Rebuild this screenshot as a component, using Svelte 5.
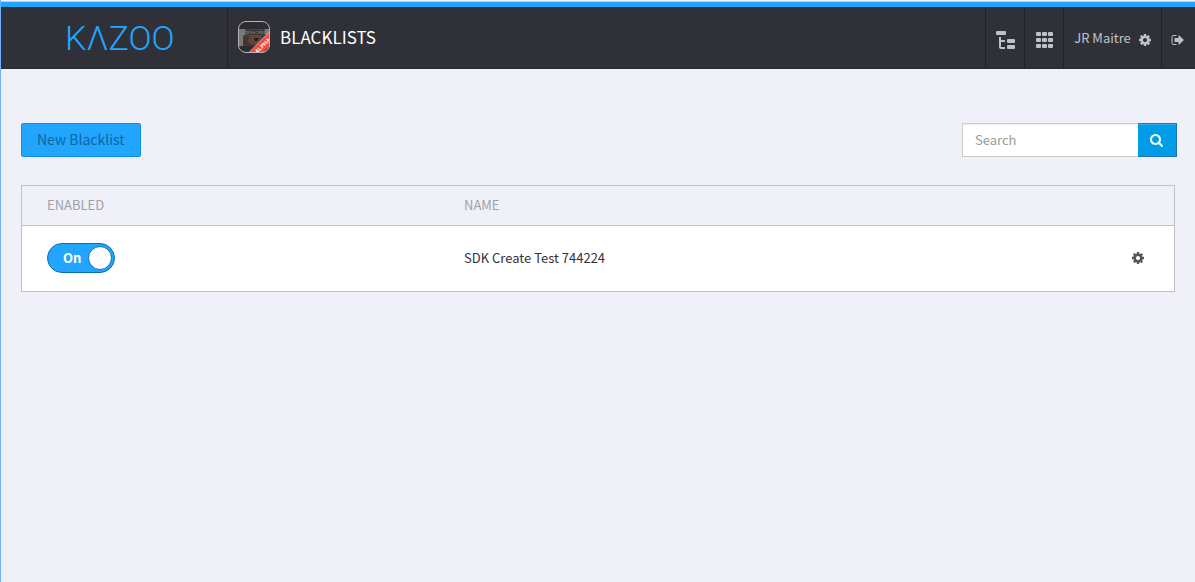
<script>
  let query = $state('');
  let blacklists = $state([{ id: 1, name: 'SDK Create Test 744224', enabled: true }]);
  const shown = $derived(
    blacklists.filter((b) => b.name.toLowerCase().includes(query.toLowerCase()))
  );
  const dots = [0, 6, 12];
</script>

{#snippet cog(size)}
  <svg width={size} height={size} viewBox="128 128 1536 1536" fill="currentColor" aria-hidden="true">
    <path d="M1152 896q0-106-75-181t-181-75-181 75-75 181 75 181 181 75 181-75 75-181zm512-109v222q0 12-8 23t-20 13l-185 28q-19 54-39 91 35 50 107 138 10 12 10 25t-9 23q-27 37-99 108t-94 71q-12 0-26-9l-138-108q-44 23-91 38-16 136-29 186-7 28-36 28h-222q-14 0-24.500-8.500t-11.500-21.500l-28-184q-49-16-90-37l-141 107q-10 9-25 9-14 0-25-11-126-114-165-168-7-10-7-23 0-12 8-23 15-21 51-66.500t54-70.500q-27-50-41-99l-183-27q-13-2-21-12.500t-8-23.500v-222q0-12 8-23t19-13l186-28q14-46 39-92-40-57-107-138-10-12-10-24 0-10 9-23 26-36 98.500-107.500t94.500-71.500q13 0 26 10l138 107q44-23 91-38 16-136 29-186 7-28 36-28h222q14 0 24.500 8.500t11.500 21.500l28 184q49 16 90 37l142-107q9-9 24-9 13 0 25 10 129 119 165 170 7 8 7 22 0 12-8 23-15 21-51 66.500t-54 70.500q26 50 41 98l183 28q13 2 21 12.500t8 23.500z" />
  </svg>
{/snippet}

<div class="page">
  <header class="topbar">
    <a class="logo" href="#home">KΛZOO</a>
    <div class="app">
      <svg class="app-icon" width="34" height="34" viewBox="0 0 34 34" aria-hidden="true">
        <defs>
          <clipPath id="tile"><rect x="1" y="1" width="32" height="32" rx="8" /></clipPath>
        </defs>
        <g clip-path="url(#tile)">
          <rect width="34" height="34" fill="#2c2c31" />
          <rect y="9" width="34" height="17" fill="#77777d" />
          <path d="M6 26V17l2-3V9h19l2 7 3 4v6z" fill="#4b342c" />
          <path d="M12 16l4-2 7 1 3 4-3 5-8 1-4-4z" fill="#60453a" />
          <path d="M17 18h5l-2 3h-2z" fill="#251b19" />
          <rect x="9" y="10" width="19" height="5" fill="#19191c" stroke="#55555a" stroke-width="1" />
          <text x="18.500" y="14" text-anchor="middle" font-size="4" fill="#8a8a8e">CENSORED</text>
          <path d="M11 34L34 11v14l-9 9z" fill="#f5473c" />
          <path d="M11 33.500L33.500 11" stroke="#e9b5b2" stroke-width="1" />
          <text class="ribbon" transform="translate(27 27) rotate(-45)" text-anchor="middle" font-size="5.500" fill="#fff">ALPHA</text>
        </g>
        <rect x="1.500" y="1.500" width="31" height="31" rx="7.500" fill="none" stroke="#b4b4b8" />
      </svg>
      <h1>BLACKLISTS</h1>
    </div>
    <nav>
      <button class="nav-item" aria-label="Account tree">
        <svg width="20" height="20" viewBox="0 0 20 20" fill="currentColor" aria-hidden="true">
          <rect x="1" y="1" width="10" height="4" rx="1" />
          <path d="M4 7h2v3h4v2H6v5h4v2H6q-2 0-2-2z" />
          <rect x="12" y="9" width="8" height="4" rx="1" />
          <rect x="12" y="15" width="8" height="4" rx="1" />
        </svg>
      </button>
      <button class="nav-item" aria-label="Applications">
        <svg width="17" height="17" viewBox="0 0 17 17" fill="currentColor" aria-hidden="true">
          {#each dots as y}
            {#each dots as x}
              <rect {x} {y} width="5" height="4" rx="1" />
            {/each}
          {/each}
        </svg>
      </button>
      <button class="nav-item user"><span>JR Maitre</span>{@render cog(12)}</button>
      <button class="nav-item exit" aria-label="Sign out">
        <svg width="14" height="14" viewBox="0 0 1792 1792" fill="currentColor" aria-hidden="true">
          <path d="M704 1440q0 4 1 20t.5 26.500-3 23.500-10 19.500-20.500 6.500h-320q-119 0-203.500-84.500t-84.500-203.500v-704q0-119 84.500-203.500t203.500-84.500h320q13 0 22.500 9.500t9.500 22.500q0 4 1 20t.5 26.500-3 23.500-10 19.500-20.500 6.500h-320q-66 0-113 47t-47 113v704q0 66 47 113t113 47h312l11.500 1 11.500 3 8 5.500 7 9 2 13.500zm928-544q0 26-19 45l-544 544q-19 19-45 19t-45-19-19-45v-288h-448q-26 0-45-19t-19-45v-384q0-26 19-45t45-19h448v-288q0-26 19-45t45-19 45 19l544 544q19 19 19 45z" />
        </svg>
      </button>
    </nav>
  </header>

  <main>
    <div class="toolbar">
      <button class="new">New Blacklist</button>
      <form class="search" onsubmit={(e) => e.preventDefault()}>
        <input type="text" placeholder="Search" aria-label="Search" bind:value={query} />
        <button aria-label="Run search">
          <svg width="13" height="13" viewBox="64 128 1664 1664" fill="currentColor" aria-hidden="true">
            <path d="M1216 832q0-185-131.500-316.500t-316.500-131.500-316.500 131.500-131.500 316.500 131.500 316.500 316.500 131.500 316.500-131.500 131.500-316.500zm512 832q0 52-38 90t-90 38q-54 0-90-38l-343-342q-179 124-399 124-143 0-273.500-55.500t-225-150-150-225-55.500-273.500 55.500-273.500 150-225 225-150 273.500-55.500 273.500 55.500 225 150 150 225 55.500 273.500q0 220-124 399l343 343q37 37 37 90z" />
          </svg>
        </button>
      </form>
    </div>

    <table>
      <thead>
        <tr>
          <th class="enabled" scope="col">ENABLED</th>
          <th scope="col">NAME</th>
          <td class="actions"></td>
        </tr>
      </thead>
      <tbody>
        {#each shown as item (item.id)}
          <tr>
            <td>
              <label class="switch" class:off={!item.enabled}>
                <input type="checkbox" bind:checked={item.enabled} />
                <span>{item.enabled ? 'On' : 'Off'}</span>
                <i></i>
              </label>
            </td>
            <td>{item.name}</td>
            <td class="actions"><button aria-label="Settings">{@render cog(12)}</button></td>
          </tr>
        {/each}
      </tbody>
    </table>
  </main>
</div>

<style>
  :global(body) {
    margin: 0;
    background: #f0f0f9;
  }
  .page {
    box-sizing: border-box;
    min-height: 100vh;
    border-left: 1px solid #6fb4fb;
    font: 13px/20px 'Noto Sans CJK SC', 'Source Sans Pro', sans-serif;
    color: #333;
  }
  .page::before {
    content: '';
    display: block;
    height: 1px;
    background: #f4f4f4;
    border-bottom: 1px solid #c3cdd6;
  }
  button,
  input {
    font: inherit;
    margin: 0;
    border-radius: 0;
  }
  svg {
    display: block;
    flex: none;
  }
  .topbar {
    display: flex;
    height: 62px;
    background: #303038;
    border-top: 5px solid #22a5ff;
    box-shadow: inset 0 -1px #2b2b33;
  }
  .logo {
    box-sizing: border-box;
    width: 227px;
    padding-left: 64px;
    border-right: 1px solid #22222a;
    color: #22a5ff;
    font: 300 34px/62px Roboto, sans-serif;
    text-decoration: none;
  }
  .app {
    display: flex;
    align-items: center;
    gap: 9px;
    flex: 1;
    padding: 0 0 2px 9px;
  }
  .app-icon {
    font-family: 'Liberation Sans', sans-serif;
    font-weight: bold;
  }
  h1 {
    margin: 0;
    color: #fff;
    font-size: 17px;
    font-weight: 400;
    line-height: 24px;
  }
  nav {
    display: flex;
  }
  .nav-item {
    box-sizing: border-box;
    display: flex;
    align-items: center;
    justify-content: center;
    width: 39px;
    padding: 4px 0 0;
    border: 0;
    border-left: 1px solid #22222a;
    background: none;
    color: #c0c0ca;
  }
  .nav-item.user {
    width: 98px;
    gap: 8px;
  }
  .nav-item.user span {
    margin-top: -4px;
  }
  .nav-item.exit {
    width: 34px;
    padding-right: 2px;
  }
  main {
    padding: 54px 20px 20px;
  }
  .toolbar {
    display: flex;
    justify-content: space-between;
    margin: 0 -2px 28px 0;
  }
  .new {
    height: 34px;
    padding: 0 15px 2px;
    border: 1px solid #0a90ee;
    border-radius: 2px;
    background: #22a5ff;
    color: #0d659f;
    font-size: 14px;
  }
  .search {
    display: flex;
  }
  .search input {
    box-sizing: border-box;
    width: 176px;
    height: 34px;
    padding: 0 12px 2px;
    border: 1px solid #ccc;
    border-right: 0;
    background: #fff;
    box-shadow: inset 0 1px 1px #00000013;
  }
  .search input::placeholder {
    color: #999;
    opacity: 1;
  }
  .search button {
    display: flex;
    align-items: center;
    justify-content: center;
    box-sizing: border-box;
    width: 39px;
    padding: 0 2px 0 0;
    border: 1px solid #1f72b5;
    border-left-color: #009ce8;
    background: #009ce8;
    box-shadow: inset 0 1px #33b0ed;
    color: #fff;
  }
  table {
    width: 100%;
    border: 1px solid #c0c0cc;
    border-spacing: 0;
    background: #fff;
  }
  th,
  td {
    padding: 0 25px 2px;
    text-align: left;
  }
  th,
  thead td {
    height: 37px;
    border-bottom: 1px solid #c0c0cc;
    background: #f0f0f9;
    color: #a0a0a8;
    font-weight: 400;
  }
  tbody td {
    height: 63px;
  }
  .enabled {
    width: 367px;
  }
  .actions {
    width: 12px;
    padding: 0 30px 2px;
  }
  .actions button {
    display: block;
    padding: 0;
    border: 0;
    background: none;
    color: #555;
  }
  .switch {
    box-sizing: border-box;
    position: relative;
    display: flex;
    align-items: center;
    justify-content: space-between;
    width: 68px;
    height: 30px;
    padding: 0 2px 0 15px;
    border: 1px solid #0b6fb5;
    border-radius: 15px;
    background: #22a5ff;
    color: #fff;
    font-weight: 700;
  }
  .switch input {
    position: absolute;
    inset: 0;
    width: 100%;
    height: 100%;
    margin: 0;
    opacity: 0;
  }
  .switch i {
    box-sizing: border-box;
    width: 24px;
    height: 24px;
    border: 1px solid #0b6fb5;
    border-radius: 50%;
    background: #fff;
  }
  .switch.off {
    flex-direction: row-reverse;
    padding: 0 15px 0 2px;
    background: #a0a0a8;
  }
</style>
